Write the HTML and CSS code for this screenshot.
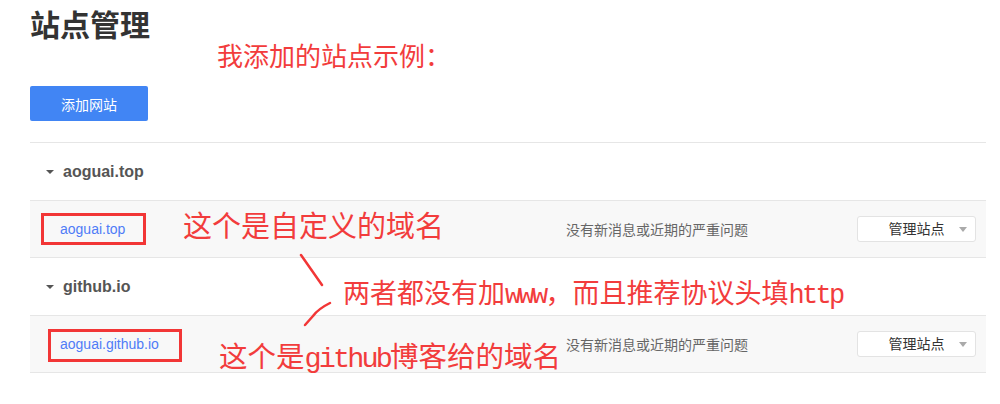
FILE: index.html
```html
<!DOCTYPE html>
<html lang="zh-CN">
<head>
<meta charset="UTF-8" />
<meta name="viewport" content="width=device-width, initial-scale=1.0"/>
<title>站点管理</title>
<link rel="stylesheet" href="styles.css">
</head>
<body>
<div class="page">
    <h1 class="page-title">站点管理</h1>
    <button class="add-btn">添加网站</button>

    <div class="sites">
        <div class="group">
            <div class="group-head"><span class="caret"></span>aoguai.top</div>
            <div class="site-row">
                <a class="site-link" href="#">aoguai.top</a>
                <span class="site-status">没有新消息或近期的严重问题</span>
                <div class="manage">管理站点<span class="manage-caret"></span></div>
            </div>
        </div>
        <div class="group">
            <div class="group-head"><span class="caret"></span>github.io</div>
            <div class="site-row">
                <a class="site-link" href="#">aoguai.github.io</a>
                <span class="site-status">没有新消息或近期的严重问题</span>
                <div class="manage">管理站点<span class="manage-caret"></span></div>
            </div>
        </div>
    </div>
</div>

<!-- hand-drawn notes on top of the screenshot -->
<div class="note note-1">我添加的站点示例：</div>
<div class="note note-2">这个是自定义的域名</div>
<div class="note note-3">两者都没有加<span class="latin">www</span>，而且推荐协议头填<span class="latin">http</span></div>
<div class="note note-4">这个是<span class="latin">github</span>博客给的域名</div>
<svg class="marks" width="1000" height="404" viewBox="0 0 1000 404">
    <rect x="42.5" y="214.5" width="102" height="29" />
    <rect x="49.5" y="330.5" width="131" height="30" />
    <path d="M301 255 L322 285" />
    <path d="M330 303 Q318 309 313 316 L305 325" />
</svg>
</body>
</html>
```

FILE: styles.css
```css
body {
    margin: 0;
    background: #fff;
    color: #333;
    font-family: "Liberation Sans", "Noto Sans CJK SC", sans-serif;
    position: relative;
    width: 1000px;
    height: 404px;
    overflow: hidden;
}
.page {
    padding: 3px 14px 0 30px;
}
.page-title {
    margin: 0;
    font-family: "Noto Sans CJK SC", sans-serif;
    font-size: 30px;
    font-weight: 700;
    line-height: 40px;
    color: #333;
}
.add-btn {
    display: block;
    margin-top: 43px;
    width: 118px;
    height: 35px;
    border: none;
    border-radius: 2px;
    background-color: #4185f4;
    color: #fff;
    font-family: "Noto Sans CJK SC", sans-serif;
    font-size: 14px;
    cursor: pointer;
}
.sites {
    margin-top: 21px;
    border-bottom: 1px solid #e6e6e6;
}
.group {
    border-top: 1px solid #e6e6e6;
}
.group-head {
    height: 57px;
    display: flex;
    align-items: center;
    gap: 9px;
    padding-left: 16px;
    font-size: 16px;
    font-weight: 700;
    color: #555;
}
.caret {
    width: 0;
    height: 0;
    border-left: 4px solid transparent;
    border-right: 4px solid transparent;
    border-top: 4px solid #555;
}
.site-row {
    display: grid;
    grid-template-columns: 506px 1fr 119px;
    align-items: center;
    height: 56px;
    padding: 0 10px 0 30px;
    background-color: #f8f8f8;
    border-top: 1px solid #e6e6e6;
}
.site-link {
    font-size: 14px;
    color: #4f7cf7;
    text-decoration: none;
}
.site-status {
    font-size: 14px;
    color: #666;
}
.manage {
    position: relative;
    height: 26px;
    box-sizing: border-box;
    border: 1px solid #e3e3e3;
    border-radius: 3px;
    background: #fff;
    font-size: 14px;
    line-height: 24px;
    text-align: center;
    color: #333;
}
.manage-caret {
    position: absolute;
    right: 8px;
    top: 10px;
    width: 0;
    height: 0;
    border-left: 4px solid transparent;
    border-right: 4px solid transparent;
    border-top: 5px solid #aaa;
}

/* annotations */
.note {
    position: absolute;
    color: #f23c3c;
    font-family: "Liberation Serif", "Noto Sans CJK SC", serif;
    font-weight: 400;
    line-height: 1;
    white-space: nowrap;
}
.note .latin {
    font-family: "Liberation Mono", monospace;
    letter-spacing: -0.1em;
}
.note-1 { left: 217px; top: 45px; font-size: 26px; }
.note-2 { left: 183px; top: 213px; font-size: 29px; }
.note-3 { left: 343px; top: 281px; font-size: 27px; }
.note-4 { left: 219px; top: 344px; font-size: 28.5px; }
.marks {
    position: absolute;
    left: 0;
    top: 0;
    pointer-events: none;
    fill: none;
    stroke: #f23636;
}
.marks rect { stroke-width: 3; }
.marks path { stroke-width: 2.5; stroke-linecap: round; stroke-linejoin: round; }
```
